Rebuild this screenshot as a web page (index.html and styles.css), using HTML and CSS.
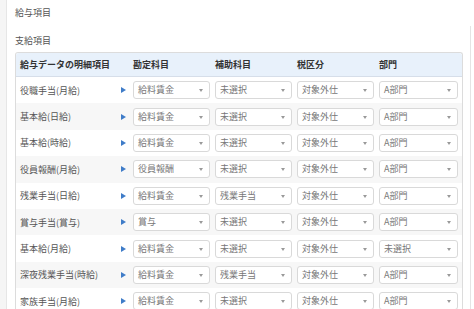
FILE: index.html
```html
<!DOCTYPE html>
<html>
<head lang="ja">
  <meta charset="UTF-8">
  <title>給与項目</title>
  <link rel="stylesheet" href="styles.css">
</head>
<body>
  <div class="page">
    <div class="side"></div>
    <div class="main">
      <div class="title">給与項目</div>
      <div class="section">
        <div class="heading">支給項目</div>
        <div class="table">
          <div class="thead">
            <div class="th wide">給与データの明細項目</div>
            <div class="th">勘定科目</div>
            <div class="th">補助科目</div>
            <div class="th">税区分</div>
            <div class="th">部門</div>
          </div>

          <div class="row">
            <div class="label">役職手当(月給)</div>
            <div class="go"><i></i></div>
            <div class="sel">給料賃金</div>
            <div class="sel">未選択</div>
            <div class="sel">対象外仕</div>
            <div class="sel">A部門</div>
          </div>
          <div class="row">
            <div class="label">基本給(日給)</div>
            <div class="go"><i></i></div>
            <div class="sel">給料賃金</div>
            <div class="sel">未選択</div>
            <div class="sel">対象外仕</div>
            <div class="sel">A部門</div>
          </div>
          <div class="row">
            <div class="label">基本給(時給)</div>
            <div class="go"><i></i></div>
            <div class="sel">給料賃金</div>
            <div class="sel">未選択</div>
            <div class="sel">対象外仕</div>
            <div class="sel">A部門</div>
          </div>
          <div class="row">
            <div class="label">役員報酬(月給)</div>
            <div class="go"><i></i></div>
            <div class="sel">役員報酬</div>
            <div class="sel">未選択</div>
            <div class="sel">対象外仕</div>
            <div class="sel">A部門</div>
          </div>
          <div class="row">
            <div class="label">残業手当(日給)</div>
            <div class="go"><i></i></div>
            <div class="sel">給料賃金</div>
            <div class="sel">残業手当</div>
            <div class="sel">対象外仕</div>
            <div class="sel">A部門</div>
          </div>
          <div class="row">
            <div class="label">賞与手当(賞与)</div>
            <div class="go"><i></i></div>
            <div class="sel">賞与</div>
            <div class="sel">未選択</div>
            <div class="sel">対象外仕</div>
            <div class="sel">A部門</div>
          </div>
          <div class="row">
            <div class="label">基本給(月給)</div>
            <div class="go"><i></i></div>
            <div class="sel">給料賃金</div>
            <div class="sel">未選択</div>
            <div class="sel">対象外仕</div>
            <div class="sel">未選択</div>
          </div>
          <div class="row">
            <div class="label">深夜残業手当(時給)</div>
            <div class="go"><i></i></div>
            <div class="sel">給料賃金</div>
            <div class="sel">残業手当</div>
            <div class="sel">対象外仕</div>
            <div class="sel">A部門</div>
          </div>
          <div class="row">
            <div class="label">家族手当(月給)</div>
            <div class="go"><i></i></div>
            <div class="sel">給料賃金</div>
            <div class="sel">未選択</div>
            <div class="sel">対象外仕</div>
            <div class="sel">A部門</div>
          </div>
        </div>
      </div>
    </div>
  </div>
</body>
</html>
```

FILE: styles.css
```css
* {
  margin: 0;
  padding: 0;
  box-sizing: border-box;
}
body {
  font-family: "Noto Sans CJK JP", "Noto Sans", sans-serif;
  font-size: 9px;
  color: #555;
  background: #fff;
  height: 309px;
  overflow: hidden;
}
.page {
  display: flex;
  height: 309px;
}
.side {
  width: 7px;
  background: #f5f5f5;
  border-right: 1px solid #e6e6e6;
}
.main {
  width: 464px;
  padding-left: 8px;
}
.title {
  height: 26px;
  line-height: 26px;
  color: #555;
}
.section {
  border-right: 1px solid #e4e4e4;
  padding-right: 7px;
  height: 283px;
}
.heading {
  padding-top: 4px;
  height: 26px;
  line-height: 22px;
  color: #555;
}
.table {
  border: 1px solid #dcdcdc;
  border-bottom: none;
  border-radius: 3px 3px 0 0;
  width: 448px;
}
.thead,
.row {
  display: grid;
  grid-template-columns: 95px 8px 77px 77px 77px 79px;
  column-gap: 5px;
  align-items: center;
  padding-left: 4px;
}
.thead {
  height: 24px;
  background: #e8f1fb;
  border-bottom: 1px solid #d6dee9;
  border-radius: 3px 3px 0 0;
}
.th {
  font-weight: 700;
  color: #333;
}
.th.wide {
  grid-column: span 2;
}
.row {
  height: 26.4px;
}
.row:nth-child(odd) {
  background: #f7f7f7;
}
.label {
  color: #555;
  white-space: nowrap;
}
.go {
  padding-left: 1px;
}
.go i {
  display: block;
  width: 0;
  height: 0;
  border-top: 3px solid transparent;
  border-bottom: 3px solid transparent;
  border-left: 5px solid #3f7cc8;
}
.sel {
  position: relative;
  height: 18px;
  line-height: 16px;
  padding-left: 4px;
  border: 1px solid #d9d9d9;
  border-radius: 3px;
  background: #fff;
  color: #777;
}
.sel::after {
  content: "";
  position: absolute;
  right: 6px;
  top: 7px;
  width: 0;
  height: 0;
  border-left: 2.5px solid transparent;
  border-right: 2.5px solid transparent;
  border-top: 3px solid #999;
}
```
